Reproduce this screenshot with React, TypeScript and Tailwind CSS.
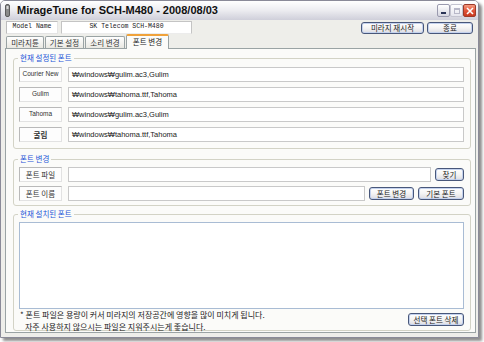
const KR = "font-['Noto_Sans_CJK_KR','Noto_Sans_CJK_SC',sans-serif]"
const SANS = "font-['Liberation_Sans','Noto_Sans_CJK_KR',sans-serif]"

function XpButton({ label, className = '' }: { label: string; className?: string }) {
  return (
    <div
      className={`flex items-center justify-center rounded-[3px] border border-[#48577a] bg-gradient-to-b from-white via-[#f4f4f4] to-[#dcdce2] shadow-[inset_0_0_0_1px_#c4d2ee] text-[7.5px] leading-none text-[#222] ${KR} ${className}`}
    >
      {label}
    </div>
  )
}

function Group({ title, className = '', children }: { title: string; className?: string; children: React.ReactNode }) {
  return (
    <div className={`relative rounded-[3px] border border-[#d3d3c6] ${className}`}>
      <span className={`absolute -top-[6px] left-[4px] bg-[#fbfbf9] px-[2px] text-[7.5px] leading-[10px] text-[#1c55d8] ${KR}`}>
        {title}
      </span>
      {children}
    </div>
  )
}

function LabelBox({ children, className = '' }: { children: React.ReactNode; className?: string }) {
  return (
    <div
      className={`flex h-[15px] w-[43px] shrink-0 items-center justify-center border border-[#b9b9b9] border-b-[#e2e2e2] border-r-[#e2e2e2] bg-[#fdfdfd] text-[6.5px] leading-none text-[#333] ${className}`}
    >
      {children}
    </div>
  )
}

function Field({ value = '', className = '' }: { value?: string; className?: string }) {
  return (
    <div
      className={`flex h-[15px] items-center border border-[#c9c9c9] bg-white pl-[3px] text-[7.5px] leading-none text-[#222] ${SANS} ${className}`}
    >
      {value}
    </div>
  )
}

const current = [
  { name: 'Courier New', path: '₩windows₩gulim.ac3,Gulim' },
  { name: 'Gulim', path: '₩windows₩tahoma.ttf,Tahoma' },
  { name: 'Tahoma', path: '₩windows₩gulim.ac3,Gulim' },
  { name: '굴림', path: '₩windows₩tahoma.ttf,Tahoma' },
]

const tabs = [
  { label: '미라지튠', w: 'w-[38px]' },
  { label: '기본 설정', w: 'w-[39px]' },
  { label: '소리 변경', w: 'w-[40px]' },
]

export default function App() {
  return (
    <div className="relative h-[342px] w-[484px] overflow-hidden bg-white">
      <div className="flex h-[338px] w-[479px] flex-col rounded-t-[5px] border border-[#8a8a98] bg-[#eeeeea] pb-[4px] shadow-[3px_3px_3px_rgba(0,0,0,0.45)]">
        {/* title bar */}
        <div className="flex h-[19px] shrink-0 items-center rounded-t-[4px] bg-gradient-to-b from-[#ffffff] via-[#ececf0] to-[#cfcfda] pl-[3px] pr-[2px]">
          <svg width="7" height="13" viewBox="0 0 7 13" className="shrink-0">
            <rect x="1.5" y="0.5" width="4" height="12" rx="1.5" fill="#8a8a8a" stroke="#444" strokeWidth="0.8" />
            <rect x="2.5" y="2" width="2" height="3" fill="#d8d8d8" />
          </svg>
          <span className={`ml-[6px] text-[11px] font-bold leading-none text-[#111] ${SANS}`}>
            MirageTune for SCH-M480 - 2008/08/03
          </span>
          <div className="ml-auto flex">
            <div className="flex h-[13px] w-[13px] items-end justify-center rounded-[2px] border border-[#9a9aae] bg-gradient-to-b from-white to-[#d6d6e0] pb-[2px]">
              <div className="h-[2px] w-[5px] bg-[#2a3456]" />
            </div>
            <div className="flex h-[13px] w-[13px] items-center justify-center rounded-[2px] border border-[#c4c4d0] bg-gradient-to-b from-white to-[#e6e6ee]">
              <div className="h-[6px] w-[6px] border border-[#b8b8c8] border-t-2" />
            </div>
            <div className="flex h-[13px] w-[13px] items-center justify-center rounded-[2px] border border-[#9c3a2a] bg-gradient-to-b from-[#f49a80] via-[#e2553a] to-[#c9381e]">
              <svg width="8" height="8" viewBox="0 0 8 8">
                <path d="M1 1L7 7M7 1L1 7" stroke="white" strokeWidth="1.6" />
              </svg>
            </div>
          </div>
        </div>

        {/* client */}
        <div className="flex min-h-0 flex-1 flex-col pl-[4px] pr-[2px] pt-[1px]">
          {/* model row */}
          <div className="flex h-[13px] shrink-0 items-start">
            <div className="ml-[1px] flex h-[13px] w-[52px] items-center justify-center border border-[#bdbdbd] border-b-[#e4e4e4] border-r-[#e4e4e4] bg-white text-[6.5px] leading-none text-[#222] font-['Liberation_Mono',monospace]">
              Model Name
            </div>
            <div className="ml-[3px] flex h-[13px] w-[131px] items-center justify-center border border-[#c4c4c4] border-b-[#ececec] bg-white text-[6.5px] leading-none text-[#222] font-['Liberation_Mono',monospace]">
              SK Telecom SCH-M480
            </div>
            <XpButton label="미라지 재시작" className="ml-auto mt-[1px] h-[12px] w-[63px]" />
            <XpButton label="종료" className="ml-[3px] mr-[3px] mt-[1px] h-[12px] w-[46px]" />
          </div>

          {/* tabs */}
          <div className="mt-[1px] flex h-[13px] shrink-0 items-end gap-[1px] pl-[1px]">
            {tabs.map((t) => (
              <div
                key={t.label}
                className={`flex h-[12px] ${t.w} items-center justify-center rounded-t-[2px] border border-b-0 border-[#9aa3a4] bg-gradient-to-b from-white to-[#e9e8e2] text-[7.5px] leading-none text-[#333] ${KR}`}
              >
                {t.label}
              </div>
            ))}
            <div
              className={`relative z-10 -mb-[1px] flex h-[15px] w-[43px] items-center justify-center rounded-t-[2px] border border-b-0 border-[#9aa3a4] border-t-2 border-t-[#f0a23a] bg-[#fbfbf9] pb-[1px] text-[7.5px] leading-none text-[#222] ${KR}`}
            >
              폰트 변경
            </div>
          </div>

          {/* panel */}
          <div className="flex min-h-0 flex-1 flex-col overflow-hidden border border-[#9aa3a4] bg-[#fbfbf9] pl-[7px] pr-[4px]">
            <Group title="현재 설정된 폰트" className="mt-[9px] h-[91px] shrink-0">
              <div className="flex flex-col gap-[5px] pl-[5px] pr-[6px] pt-[8px]">
                {current.map((r) => (
                  <div key={r.name} className="flex gap-[6px]">
                    <LabelBox
                      className={
                        r.name === '굴림'
                          ? `text-[7.5px] font-bold ${KR}`
                          : SANS
                      }
                    >
                      {r.name}
                    </LabelBox>
                    <Field value={r.path} className="flex-1" />
                  </div>
                ))}
              </div>
            </Group>

            <Group title="폰트 변경" className="mt-[10px] h-[47px] shrink-0">
              <div className="flex flex-col gap-[4px] pl-[5px] pr-[6px] pt-[7px]">
                <div className="flex items-center">
                  <LabelBox className={`text-[7.5px] ${KR}`}>폰트 파일</LabelBox>
                  <Field className="ml-[6px] w-[363px]" />
                  <XpButton label="찾기" className="ml-auto h-[13px] w-[29px]" />
                </div>
                <div className="flex items-center">
                  <LabelBox className={`text-[7.5px] ${KR}`}>폰트 이름</LabelBox>
                  <Field className="ml-[6px] w-[297px]" />
                  <XpButton label="폰트 변경" className="ml-auto h-[13px] w-[45px]" />
                  <XpButton label="기본 폰트" className="ml-[4px] h-[13px] w-[46px]" />
                </div>
              </div>
            </Group>

            <Group title="현재 설치된 폰트" className="mb-[1px] mt-[8px] min-h-0 flex-1">
              <div className="flex flex-col pl-[5px] pr-[6px] pt-[7px]">
                <div className="h-[87px] border border-[#a9bcd4] bg-white" />
                <div className="flex items-start">
                  <div className={`pl-[1px] text-[8px] leading-[12px] text-[#222] ${KR}`}>
                    <div>* 폰트 파일은 용량이 커서 미라지의 저장공간에 영향을 많이 미치게 됩니다.</div>
                    <div className="pl-[5px]">자주 사용하지 않으시는 파일은 지워주시는게 좋습니다.</div>
                  </div>
                  <XpButton label="선택 폰트 삭제" className="ml-auto mt-[4px] h-[13px] w-[56px]" />
                </div>
              </div>
            </Group>
          </div>
        </div>
      </div>
    </div>
  )
}
